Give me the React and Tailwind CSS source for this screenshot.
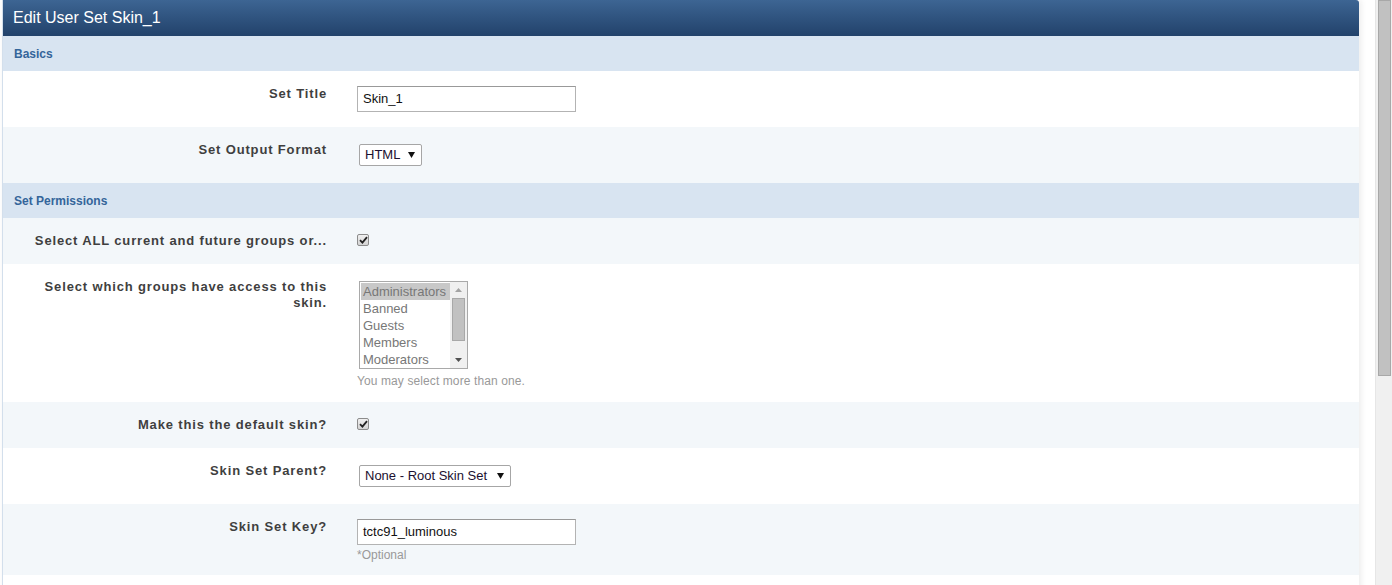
import React from "react";

const F = { fontFamily: '"Liberation Sans", Arial, sans-serif' };

function Check() {
  return (
    <div className="w-[12px] h-[12px] border border-[#8c8c8c] rounded-[2px] bg-gradient-to-b from-[#f0f0f0] to-[#d4d4d4] flex items-center justify-center">
      <svg width="9" height="8" viewBox="0 0 9 8">
        <path d="M1 4.2 L3.4 6.6 L8 1.2" stroke="#222" strokeWidth="1.8" fill="none" />
      </svg>
    </div>
  );
}

function Select({ text, w }) {
  return (
    <div
      className={`h-[22px] border border-[#a6a6a6] rounded-[2px] bg-white flex items-center justify-between pl-[5px] pr-[6px] text-[13px] text-[#1b1030] ${w}`}
    >
      <span>{text}</span>
      <svg width="7" height="6" viewBox="0 0 7 6">
        <path d="M0 0 H7 L3.5 6 Z" fill="#111" />
      </svg>
    </div>
  );
}

function Input({ value }) {
  return (
    <div className="w-[219px] h-[26px] border border-[#b3b3b3] border-t-[#999] bg-white flex items-center px-[5px] text-[13px] text-[#111]">
      {value}
    </div>
  );
}

function Row({ label, alt, h, children, labelClass = "" }) {
  return (
    <div className={`flex ${alt ? "bg-[#f3f7fa]" : "bg-white"} ${h}`}>
      <div className={`w-[334px] shrink-0 text-right pr-[10px] pt-[15px] pl-[20px] text-[13px] font-bold text-[#3f3f3f] leading-[16px] tracking-[0.85px] ${labelClass}`}>
        {label}
      </div>
      <div className="pl-[20px] pt-[15px] flex-1">{children}</div>
    </div>
  );
}

function Section({ title }) {
  return (
    <div className="h-[35px] bg-[#d8e4f1] flex items-center pl-[11px] text-[12px] font-bold text-[#34659a]">
      {title}
    </div>
  );
}

export default function App() {
  return (
    <div className="w-[1392px] h-[585px] overflow-hidden bg-white flex" style={F}>
      <div className="flex-1 relative">
        <div className="ml-[2px] mr-[16px] border-l border-[#d3dfec] shadow-[2px_0_6px_rgba(0,0,0,0.08)]">
          <div className="h-[36px] rounded-tr-[3px] bg-gradient-to-b from-[#3d6593] to-[#22426b] flex items-center pl-[10px] text-[16px] text-white">
            Edit User Set Skin_1
          </div>
          <Section title="Basics" />
          <Row label="Set Title" h="h-[56px]">
            <Input value="Skin_1" />
          </Row>
          <Row label="Set Output Format" alt h="h-[56px]">
            <div className="pl-[2px] pt-[2px]">
              <Select text="HTML" w="w-[63px]" />
            </div>
          </Row>
          <Section title="Set Permissions" />
          <Row label="Select ALL current and future groups or..." alt h="h-[46px]">
            <div className="pt-[1px]">
              <Check />
            </div>
          </Row>
          <Row label="Select which groups have access to this skin." h="h-[138px]" labelClass="pl-[30px]">
            <div className="pl-[2px] pt-[2px]">
              <div className="w-[109px] h-[88px] border border-[#a9a9a9] bg-white flex text-[13px] text-[#777] leading-[17px]">
                <div className="flex-1 pt-[1px] pl-[1px]">
                  <div className="bg-[#c8c8c8] pl-[2px]">Administrators</div>
                  <div className="pl-[2px]">Banned</div>
                  <div className="pl-[2px]">Guests</div>
                  <div className="pl-[2px]">Members</div>
                  <div className="pl-[2px]">Moderators</div>
                </div>
                <div className="w-[17px] bg-[#f0f0f0] flex flex-col items-center">
                  <div className="h-[16px] flex items-center justify-center">
                    <svg width="7" height="4" viewBox="0 0 7 4"><path d="M0 4 L3.5 0 L7 4 Z" fill="#a3a3a3" /></svg>
                  </div>
                  <div className="w-[13px] h-[43px] bg-[#c1c1c1] border border-[#a8a8a8]" />
                  <div className="flex-1" />
                  <div className="h-[16px] flex items-center justify-center">
                    <svg width="7" height="4" viewBox="0 0 7 4"><path d="M0 0 L7 0 L3.5 4 Z" fill="#505050" /></svg>
                  </div>
                </div>
              </div>
            </div>
            <div className="text-[12px] text-[#999] mt-[3px] tracking-[0.1px]">You may select more than one.</div>
          </Row>
          <Row label="Make this the default skin?" alt h="h-[46px]">
            <div className="pt-[1px]">
              <Check />
            </div>
          </Row>
          <Row label="Skin Set Parent?" h="h-[56px]">
            <div className="pl-[2px] pt-[2px]">
              <Select text="None - Root Skin Set" w="w-[152px]" />
            </div>
          </Row>
          <Row label="Skin Set Key?" alt h="h-[71px]">
            <Input value="tctc91_luminous" />
            <div className="text-[12px] text-[#999] mt-[1px]">*Optional</div>
          </Row>
          <div className="h-[20px] bg-white" />
        </div>
      </div>
      <div className="w-[17px] h-full bg-[#f0f0f0] border-l border-[#e6e6e6] flex justify-center">
        <div className="w-[13px] h-[376px] bg-[#c1c1c1] border border-[#a8a8a8]" />
      </div>
    </div>
  );
}
